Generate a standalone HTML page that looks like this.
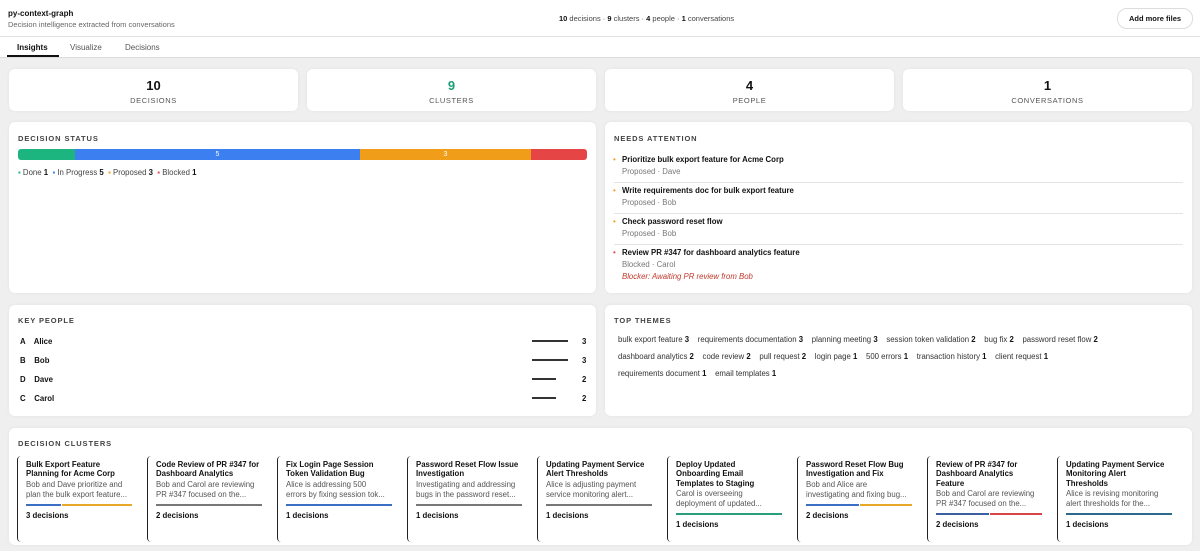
<!DOCTYPE html>
<html><head><meta charset="utf-8"><style>
*{box-sizing:border-box;margin:0;padding:0}
body{width:1200px;height:551px;overflow:hidden;background:#efefef;font-family:"Liberation Sans",sans-serif;color:#111;position:relative}
.hdr{position:absolute;left:0;top:0;width:1200px;height:37px;background:#fff;border-bottom:1px solid #e2e2e2}
.tabs{position:absolute;left:0;top:37px;width:1200px;height:21px;background:#fff;border-bottom:1px solid #ddd;font-size:8px;color:#555}
.tabs span{position:absolute;top:6px}
.card{position:absolute;background:#fff;border-radius:6px;box-shadow:0 0 3px rgba(0,0,0,.06)}
.stat{text-align:center}
.stat b{display:block;font-size:13px;margin-top:9px}
.stat i{display:block;font-style:normal;font-size:7.5px;letter-spacing:.6px;color:#555;margin-top:3px}
.ttl{position:absolute;left:9px;top:12px;font-size:7.5px;font-weight:bold;letter-spacing:.9px;color:#444}
.abs{position:absolute}
.na{position:absolute;left:9px;right:9px;font-size:7.8px}
.na b{display:block;font-size:7.8px}
.na .s{color:#777;margin-top:3px}
.dot{position:absolute;left:-1px;top:0;font-size:8px}
.th{position:absolute;font-size:7.8px;color:#333}
.th b{color:#111}
.cl{position:absolute;top:28px;width:121px;height:86px;border-left:1.5px solid #222;border-radius:4px;padding:4px 6px 0 8px;font-size:7.8px}
.cl b{display:block;font-size:7.8px;line-height:9.3px;white-space:nowrap}
.cl p{color:#555;line-height:10px;margin-top:1px;white-space:nowrap;overflow:hidden}
.cl .bar{height:2px;margin:4px 0 5px 0;display:flex}
.cl .n{font-weight:bold}
</style></head><body>
<div class="hdr">
<div class="abs" style="left:8px;top:9px;font-size:8px;font-weight:bold">py-context-graph</div>
<div class="abs" style="left:8px;top:20px;font-size:7.5px;color:#666">Decision intelligence extracted from conversations</div>
<div class="abs" style="left:559px;top:14px;font-size:7.5px;color:#444"><b style="color:#111">10</b> decisions · <b style="color:#111">9</b> clusters · <b style="color:#111">4</b> people · <b style="color:#111">1</b> conversations</div>
<div class="abs" style="left:1117px;top:8px;width:76px;height:21px;border:1px solid #ddd;border-radius:10px;font-size:7.5px;font-weight:bold;text-align:center;line-height:19px">Add more files</div>
</div>
<div class="tabs"><span style="left:17px;color:#111;font-weight:bold">Insights</span><span style="left:70px">Visualize</span><span style="left:125px">Decisions</span>
<div class="abs" style="left:7px;top:18px;width:52px;height:2px;background:#111"></div></div>

<div class="card stat" style="left:9px;top:69px;width:289px;height:42px"><b>10</b><i>DECISIONS</i></div>
<div class="card stat" style="left:307px;top:69px;width:289px;height:42px"><b style="color:#1a9e78">9</b><i>CLUSTERS</i></div>
<div class="card stat" style="left:605px;top:69px;width:289px;height:42px"><b>4</b><i>PEOPLE</i></div>
<div class="card stat" style="left:903px;top:69px;width:289px;height:42px"><b>1</b><i>CONVERSATIONS</i></div>

<div class="card" style="left:9px;top:122px;width:587px;height:171px">
<div class="ttl">DECISION STATUS</div>
<div class="abs" style="left:9px;top:27px;width:569px;height:11px;border-radius:3px;overflow:hidden;display:flex;font-size:7px;color:#fff;text-align:center;line-height:11px">
<div style="width:57px;background:#1db57f"></div><div style="width:285px;background:#3b7ff0">5</div><div style="width:171px;background:#f09e19">3</div><div style="flex:1;background:#e54545"></div></div>
<div class="abs" style="left:9px;top:46px;font-size:7.8px;color:#444"><span style="color:#1db57f">▪</span> Done <b style="color:#111">1</b> &nbsp;<span style="color:#3b7ff0">▪</span> In Progress <b style="color:#111">5</b> &nbsp;<span style="color:#f09e19">▪</span> Proposed <b style="color:#111">3</b> &nbsp;<span style="color:#e54545">▪</span> Blocked <b style="color:#111">1</b></div>
</div>

<div class="card" style="left:605px;top:122px;width:587px;height:171px">
<div class="ttl">NEEDS ATTENTION</div>
<div class="na" style="top:33px;height:28px;border-bottom:1px solid #e4e4e4"><span class="dot" style="color:#f09e19">•</span><div style="padding-left:8px"><b>Prioritize bulk export feature for Acme Corp</b><div class="s">Proposed · Dave</div></div></div>
<div class="na" style="top:64px;height:28px;border-bottom:1px solid #e4e4e4"><span class="dot" style="color:#f09e19">•</span><div style="padding-left:8px"><b>Write requirements doc for bulk export feature</b><div class="s">Proposed · Bob</div></div></div>
<div class="na" style="top:95px;height:28px;border-bottom:1px solid #e4e4e4"><span class="dot" style="color:#f09e19">•</span><div style="padding-left:8px"><b>Check password reset flow</b><div class="s">Proposed · Bob</div></div></div>
<div class="na" style="top:126px;height:40px"><span class="dot" style="color:#e54545">•</span><div style="padding-left:8px"><b>Review PR #347 for dashboard analytics feature</b><div class="s">Blocked · Carol</div><div style="color:#c0392b;font-style:italic;margin-top:3px">Blocker: Awaiting PR review from Bob</div></div></div>
</div>

<div class="card" style="left:9px;top:305px;width:587px;height:111px">
<div class="ttl" style="top:11px">KEY PEOPLE</div>
<div class="abs" style="left:11px;top:27px;font-size:7.8px;font-weight:bold;line-height:19px">A &nbsp;&nbsp; Alice<br>B &nbsp;&nbsp; Bob<br>D &nbsp;&nbsp; Dave<br>C &nbsp;&nbsp; Carol</div>
<div class="abs" style="left:523px;top:35px;width:36px;height:2px;background:#333"></div>
<div class="abs" style="left:523px;top:54px;width:36px;height:2px;background:#333"></div>
<div class="abs" style="left:523px;top:73px;width:24px;height:2px;background:#333"></div>
<div class="abs" style="left:523px;top:92px;width:24px;height:2px;background:#333"></div>
<div class="abs" style="left:573px;top:27px;font-size:7.8px;font-weight:bold;line-height:19px">3<br>3<br>2<br>2</div>
</div>

<div class="card" style="left:605px;top:305px;width:587px;height:111px">
<div class="ttl" style="top:11px">TOP THEMES</div>
<div class="th" style="left:13px;top:30px">bulk export feature <b>3</b> &nbsp;&nbsp; requirements documentation <b>3</b> &nbsp;&nbsp; planning meeting <b>3</b> &nbsp;&nbsp; session token validation <b>2</b> &nbsp;&nbsp; bug fix <b>2</b> &nbsp;&nbsp; password reset flow <b>2</b></div>
<div class="th" style="left:13px;top:47px">dashboard analytics <b>2</b> &nbsp;&nbsp; code review <b>2</b> &nbsp;&nbsp; pull request <b>2</b> &nbsp;&nbsp; login page <b>1</b> &nbsp;&nbsp; 500 errors <b>1</b> &nbsp;&nbsp; transaction history <b>1</b> &nbsp;&nbsp; client request <b>1</b></div>
<div class="th" style="left:13px;top:64px">requirements document <b>1</b> &nbsp;&nbsp; email templates <b>1</b></div>
</div>

<div class="card" style="left:9px;top:428px;width:1183px;height:117px">
<div class="ttl" style="top:11px">DECISION CLUSTERS</div>
<div class="cl" style="left:8px"><b>Bulk Export Feature<br>Planning for Acme Corp</b><p>Bob and Dave prioritize and<br>plan the bulk export feature...</p><div class="bar"><div style="flex:1;background:#3b6fc4"></div><div style="flex:2;background:#e8a82a;margin-left:1px"></div></div><div class="n">3 decisions</div></div>
<div class="cl" style="left:138px"><b>Code Review of PR #347 for<br>Dashboard Analytics</b><p>Bob and Carol are reviewing<br>PR #347 focused on the...</p><div class="bar" style="background:#777"></div><div class="n">2 decisions</div></div>
<div class="cl" style="left:268px"><b>Fix Login Page Session<br>Token Validation Bug</b><p>Alice is addressing 500<br>errors by fixing session tok...</p><div class="bar" style="background:#3b6fc4"></div><div class="n">1 decisions</div></div>
<div class="cl" style="left:398px"><b>Password Reset Flow Issue<br>Investigation</b><p>Investigating and addressing<br>bugs in the password reset...</p><div class="bar" style="background:#777"></div><div class="n">1 decisions</div></div>
<div class="cl" style="left:528px"><b>Updating Payment Service<br>Alert Thresholds</b><p>Alice is adjusting payment<br>service monitoring alert...</p><div class="bar" style="background:#777"></div><div class="n">1 decisions</div></div>
<div class="cl" style="left:658px"><b>Deploy Updated<br>Onboarding Email<br>Templates to Staging</b><p>Carol is overseeing<br>deployment of updated...</p><div class="bar" style="background:#2a9d7f"></div><div class="n">1 decisions</div></div>
<div class="cl" style="left:788px"><b>Password Reset Flow Bug<br>Investigation and Fix</b><p>Bob and Alice are<br>investigating and fixing bug...</p><div class="bar"><div style="flex:1;background:#3b6fc4"></div><div style="flex:1;background:#e8a82a;margin-left:1px"></div></div><div class="n">2 decisions</div></div>
<div class="cl" style="left:918px"><b>Review of PR #347 for<br>Dashboard Analytics<br>Feature</b><p>Bob and Carol are reviewing<br>PR #347 focused on the...</p><div class="bar"><div style="flex:1;background:#3b5fa0"></div><div style="flex:1;background:#d94545;margin-left:1px"></div></div><div class="n">2 decisions</div></div>
<div class="cl" style="left:1048px"><b>Updating Payment Service<br>Monitoring Alert<br>Thresholds</b><p>Alice is revising monitoring<br>alert thresholds for the...</p><div class="bar" style="background:#2d6a8a"></div><div class="n">1 decisions</div></div>
</div>
</body></html>
